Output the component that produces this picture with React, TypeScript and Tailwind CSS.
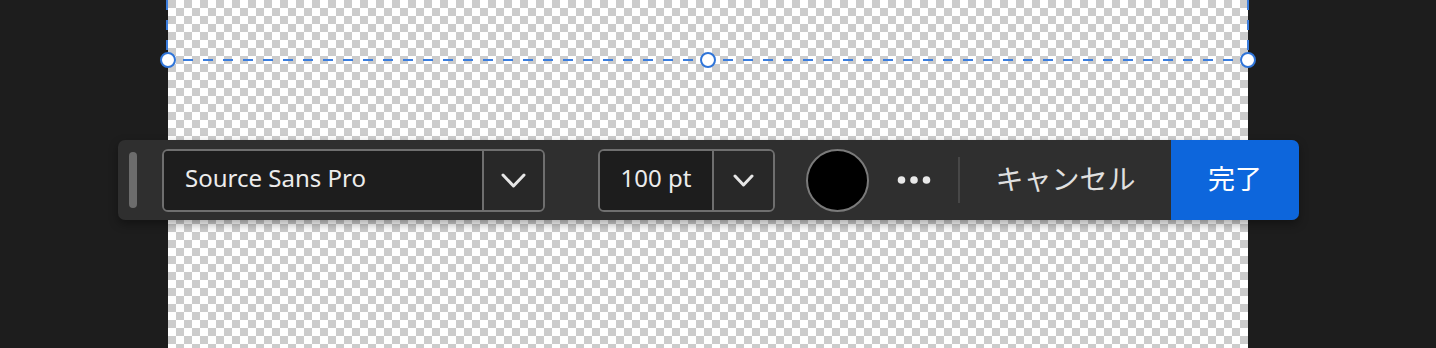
const FONT = "font-['Noto_Sans','Noto_Sans_CJK_JP',sans-serif]"

function Chevron({ w, h }: { w: number; h: number }) {
  return (
    <svg width={w} height={h} viewBox={`0 0 ${w} ${h}`} fill="none">
      <polyline
        points={`2,2 ${w / 2},${h - 2} ${w - 2},2`}
        stroke="#e6e6e6"
        strokeWidth="3"
        strokeLinecap="round"
        strokeLinejoin="round"
      />
    </svg>
  )
}

function Dots() {
  return (
    <svg width={34} height={10} viewBox="0 0 34 10">
      <circle cx={4.5} cy={5} r={3.8} fill="#e8e8e8" />
      <circle cx={17} cy={5} r={3.8} fill="#e8e8e8" />
      <circle cx={29.5} cy={5} r={3.8} fill="#e8e8e8" />
    </svg>
  )
}

function Handle({ x }: { x: number }) {
  return <circle cx={x} cy={60} r={7} fill="#ffffff" stroke="#2f74d8" strokeWidth={2} />
}

// dashed selection frame around the text layer
function Selection() {
  return (
    <svg className="absolute left-0 top-0" width={1436} height={80}>
      <g stroke="#3b7ddd" strokeWidth={2} strokeDasharray="10 10">
        <line x1={167} y1={0} x2={167} y2={60} />
        <line x1={1248} y1={0} x2={1248} y2={60} />
        <line x1={183} y1={60} x2={1248} y2={60} />
      </g>
      <Handle x={168} />
      <Handle x={708} />
      <Handle x={1248} />
    </svg>
  )
}

export default function App() {
  return (
    <div className={`relative w-[1436px] h-[348px] overflow-hidden bg-[#1d1d1d] ${FONT}`}>
      <div className="flex h-full pl-[168px]">
        <div className="w-[1080px] h-full bg-[conic-gradient(#ffffff_25%,#cccccc_0_50%,#ffffff_0_75%,#cccccc_0)] bg-size-[16px_16px]" />
      </div>

      <Selection />

      {/* Floating text toolbar */}
      <div className="absolute left-[118px] top-[140px] w-[1181px] h-[80px] flex items-center rounded-[7px] bg-[#2f2f2f] shadow-[0_4px_10px_rgba(0,0,0,0.35)]">
        <div className="ml-[11px] w-[8px] h-[56px] shrink-0 rounded-full bg-[#6c6c6c]" />

        {/* Font family */}
        <div className="ml-[25px] flex w-[383px] h-[63px] shrink-0 rounded-[6px] border-2 border-[#6f6f6f] overflow-hidden">
          <div className="flex-1 flex items-center pl-[21px] pb-[5px] bg-[#1d1d1d] text-[24px] text-[#ececec]">
            Source Sans Pro
          </div>
          <div className="w-[61px] flex items-center justify-center border-l-2 border-[#6f6f6f] bg-[#282828]">
            <Chevron w={25} h={15} />
          </div>
        </div>

        {/* Font size */}
        <div className="ml-[53px] flex w-[177px] h-[63px] shrink-0 rounded-[6px] border-2 border-[#6f6f6f] overflow-hidden">
          <div className="w-[112px] flex items-center justify-center pb-[4px] bg-[#1d1d1d] text-[24px] text-[#ececec]">
            100 pt
          </div>
          <div className="flex-1 flex items-center justify-center border-l-2 border-[#6f6f6f] bg-[#282828]">
            <Chevron w={21} h={13} />
          </div>
        </div>

        {/* Colour swatch */}
        <div className="ml-[31px] w-[63px] h-[63px] shrink-0 rounded-full bg-black border-2 border-[#7a7a7a]" />

        {/* More */}
        <div className="ml-[28px] flex items-center">
          <Dots />
        </div>

        <div className="ml-[27px] w-[2px] h-[46px] bg-[#474747]" />

        <button className="h-full w-[211px] pb-[2px] text-[28px] text-[#e0e0e0]">キャンセル</button>

        <button className="h-full flex-1 pb-[2px] rounded-r-[7px] bg-[#0d66dc] text-[27px] text-white">完了</button>
      </div>
    </div>
  )
}
